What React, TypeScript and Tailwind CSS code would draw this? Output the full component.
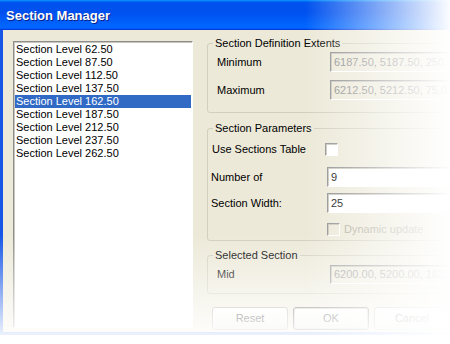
const levels = ["62.50", "87.50", "112.50", "137.50", "162.50", "187.50", "212.50", "237.50", "262.50"];

const sunken = "border border-t-[#8e8e8e] border-l-[#8e8e8e] border-r-white border-b-white shadow-[inset_1px_1px_0_#c8c6bc]";

function Field({ value, disabled }: { value: string; disabled?: boolean }) {
  return (
    <div
      className={`h-full flex-1 flex items-center pl-[3px] whitespace-nowrap overflow-hidden ${sunken} ${
        disabled ? "bg-[#ece9d8] text-[#8a8a8a]" : "bg-white text-black"
      }`}
    >
      {value}
    </div>
  );
}

function Check({ disabled }: { disabled?: boolean }) {
  return <div className={`w-[13px] h-[13px] shrink-0 ${sunken} ${disabled ? "bg-[#ece9d8]" : "bg-white"}`} />;
}

function XpButton({ label, primary }: { label: string; primary?: boolean }) {
  return (
    <div
      className={`w-[76px] h-[23px] flex items-center justify-center rounded-[3px] border bg-[linear-gradient(#ffffff,#f3f2ec_70%,#e3e1d6)] ${
        primary ? "border-[#5a5a5a] shadow-[inset_0_0_0_1px_#c8c6bc]" : "border-[#a8a69c]"
      } text-black`}
    >
      {label}
    </div>
  );
}

export default function App() {
  return (
    <div className="relative w-[450px] h-[344px] overflow-hidden bg-white text-[11px] leading-[13px] text-black font-['Liberation_Sans',Arial,sans-serif]">
      <div className="flex flex-col w-[480px] h-[335px]">
        {/* title bar */}
        <div className="h-[30px] shrink-0 flex items-center pl-[6px] text-[13px] font-bold text-white [text-shadow:1px_1px_#0a1f8a] bg-[linear-gradient(180deg,#0997ff,#0053ee_8%,#0050ee_40%,#0066ff_88%,#0066ff_93%,#005bff_95%,#003dd7_96%,#003dd7)]">
          Section Manager
        </div>

        {/* body */}
        <div className="flex-1 flex items-start bg-[#ece9d8] border-l-[3px] border-b-[3px] border-[#1656e6]">
          {/* list */}
          <div className={`mt-[11px] ml-[10px] w-[180px] h-[287px] bg-white pt-[1px] px-[1px] ${sunken} shadow-[inset_1px_1px_0_#5a5a5a]`}>
            {levels.map((l) => (
              <div
                key={l}
                className={`h-[13px] pl-[1px] whitespace-nowrap ${l === "162.50" ? "bg-[#316ac5] text-white" : ""}`}
              >
                Section Level {l}
              </div>
            ))}
          </div>

          {/* right column */}
          <div className="ml-[14px] pt-[6px] w-[250px] flex flex-col">
            <fieldset className="h-[77px] border border-[#d0d0bf] rounded-[3px]">
              <legend className="ml-[5px] px-[2px] leading-[14px]">Section Definition Extents</legend>
              <div className="flex items-center h-[20px] mt-[2px]">
                <span className="w-[122px] pl-[9px]">Minimum</span>
                <Field value="6187.50, 5187.50, 250.00" disabled />
              </div>
              <div className="flex items-center h-[20px] mt-[8px]">
                <span className="w-[122px] pl-[9px]">Maximum</span>
                <Field value="6212.50, 5212.50, 75.00" disabled />
              </div>
            </fieldset>

            <fieldset className="h-[120px] mt-[8px] border border-[#d0d0bf] rounded-[3px]">
              <legend className="ml-[5px] px-[2px] leading-[14px]">Section Parameters</legend>
              <div className="flex items-center h-[13px] mt-[8px]">
                <span className="w-[117px] pl-[4px]">Use Sections Table</span>
                <Check />
              </div>
              <div className="flex items-center h-[20px] mt-[11px]">
                <span className="w-[119px] pl-[3px]">Number of</span>
                <Field value="9" />
              </div>
              <div className="flex items-center h-[20px] mt-[6px]">
                <span className="w-[119px] pl-[3px]">Section Width:</span>
                <Field value="25" />
              </div>
              <div className="flex items-center h-[13px] mt-[10px] pl-[119px] gap-[4px] text-[#aca899]">
                <Check disabled />
                <span>Dynamic update</span>
              </div>
            </fieldset>

            <fieldset className="h-[46px] mt-[7px] border border-[#d0d0bf] rounded-[3px]">
              <legend className="ml-[5px] px-[2px] leading-[14px]">Selected Section</legend>
              <div className="flex items-center h-[19px] mt-[3px]">
                <span className="w-[122px] pl-[9px]">Mid</span>
                <Field value="6200.00, 5200.00, 162.50" disabled />
              </div>
            </fieldset>

            <div className="flex gap-[5px] mt-[13px] ml-[5px]">
              <XpButton label="Reset" />
              <XpButton label="OK" primary />
              <XpButton label="Cancel" />
            </div>
          </div>
        </div>
      </div>

      {/* fade-out overlays */}
      <div className="absolute inset-0 pointer-events-none bg-[linear-gradient(to_right,rgba(255,255,255,0)_305px,#ffffff_452px)]" />
      <div className="absolute inset-0 pointer-events-none bg-[linear-gradient(to_bottom,rgba(255,255,255,0)_235px,#ffffff_344px)]" />
    </div>
  );
}
